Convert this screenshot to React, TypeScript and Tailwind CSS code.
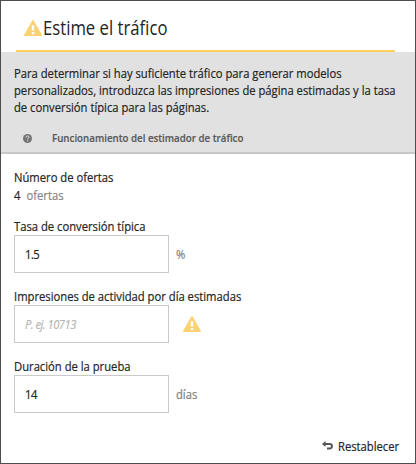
import React from "react";

function Warning() {
  return (
    <svg width="18" height="16" viewBox="0 0 18 16" className="block shrink-0">
      <path d="M8.300.5Q9-.5 9.700.5L17.900 14.800Q18.200 16 17.200 16H.8Q-.2 16 .1 14.800Z" fill="#fad273" />
      <path d="M7.800 5.200h2.400v5.400H7.800zM7.800 12h2.400v2.200H7.800z" fill="#fff" />
    </svg>
  );
}

const narrow = "w-max origin-left scale-x-[0.864]";

function Field({ label, children, ...input }: { label: string; children: React.ReactNode } & React.InputHTMLAttributes<HTMLInputElement>) {
  return (
    <div className="h-[70px]">
      <div className={`h-[18px] leading-[18px] ${narrow}`}>{label}</div>
      <div className="flex h-[38px] items-center">
        <div className="flex h-[38px] w-[155px] shrink-0 items-center border border-[#cacaca] bg-white pl-[10px]">
          <input
            {...input}
            className="w-[150px] shrink-0 origin-left scale-x-[0.861] bg-transparent leading-[18px] tracking-[-0.6px] outline-none placeholder:italic placeholder:text-[#b5b5b5]"
          />
        </div>
        {children}
      </div>
    </div>
  );
}

export default function App() {
  return (
    <main className="flex h-[464px] w-[416px] flex-col overflow-hidden whitespace-nowrap border border-[#4d4d4d] bg-white font-['Open_Sans',sans-serif] text-[13px] text-[#242424] [-webkit-text-stroke:0.2px]">
      <header className="ml-[15px] mr-[20px] flex h-[51px] shrink-0 items-center border-b-2 border-[#fccf62] pl-2 pt-[4px]">
        <Warning />
        <h1 className="ml-px origin-left scale-x-[0.835] text-[20px] leading-[26px] [-webkit-text-stroke:0px]">Estime el tráfico</h1>
      </header>
      <section className="h-[102px] shrink-0 border-b-2 border-[#c8c8c8] bg-[#e1e1e1] pl-[13px] pt-[13px]">
        <p className={`leading-[17px] ${narrow}`}>
          Para determinar si hay suficiente tráfico para generar modelos<br />
          personalizados, introduzca las impresiones de página estimadas y la tasa<br />
          de conversión típica para las páginas.
        </p>
        <div className="mt-[14px] flex h-4 items-center pl-[9px] text-[11px] font-semibold text-[#5b5b5b]">
          <svg width="9" height="9" viewBox="0 0 9 9">
            <circle cx="4.500" cy="4.500" r="4.500" fill="#747474" />
            <path d="M3 3.500Q3 2 4.500 2T6 3.300Q6 4 4.600 4.700V5.400M4.600 6.300v1" fill="none" stroke="#e1e1e1" />
          </svg>
          <span className="ml-5 origin-left scale-x-[0.885]">Funcionamiento del estimador de tráfico</span>
        </div>
      </section>
      <section className="flex-1 pl-[13px] pt-[14px]">
        <div className="h-[49px] leading-[18px]">
          <div className={narrow}>Número de ofertas</div>
          <div className={`flex gap-[7px] ${narrow}`}><span>4</span><span className="text-[#858585]">ofertas</span></div>
        </div>
        <Field label="Tasa de conversión típica" defaultValue="1.5">
          <span className={`ml-[7px] pt-[2px] text-[#808080] ${narrow}`}>%</span>
        </Field>
        <Field label="Impresiones de actividad por día estimadas" placeholder="P. ej. 10713">
          <div className="ml-[14px] pb-px"><Warning /></div>
        </Field>
        <Field label="Duración de la prueba" defaultValue="14">
          <span className={`ml-[7px] pt-[2px] text-[#808080] ${narrow}`}>días</span>
        </Field>
        <div className="mr-[16px] mt-[11px] flex h-[18px] items-center justify-end">
          <svg width="11" height="9" viewBox="0 0 11 9" className="-mt-[3px]">
            <path d="M0 3 3.500 0v6Z" fill="#555" />
            <path d="M3 3h4.500Q10 3 10 5.200T7.500 7.500H5" fill="none" stroke="#555" strokeWidth="1.900" />
          </svg>
          <span className={`ml-[5px] -mr-[10px] ${narrow}`}>Restablecer</span>
        </div>
      </section>
    </main>
  );
}
